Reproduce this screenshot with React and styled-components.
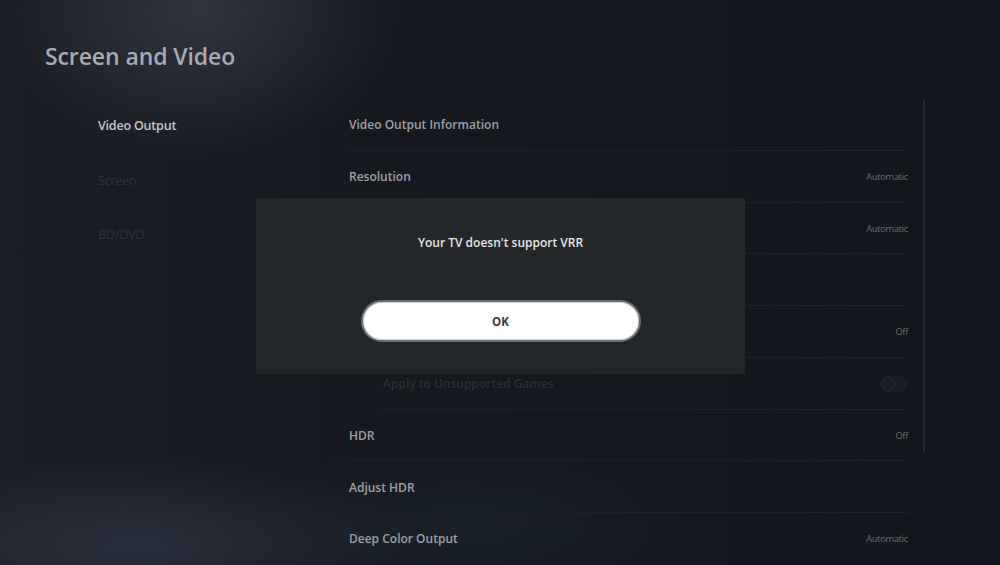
import React from "react";
import styled, { createGlobalStyle } from "styled-components";

const Global = createGlobalStyle`
  html, body { margin: 0; padding: 0; background: #13161c; }
  body { font-family: "Open Sans", "Noto Sans", sans-serif; }
  * { box-sizing: border-box; }
`;

const Page = styled.div`
  position: relative;
  width: 1000px;
  height: 565px;
  overflow: hidden;
  display: flex;
  flex-direction: column;
  background:
    radial-gradient(ellipse 200px 150px at 200px 10px, rgba(72,78,94,0.5), rgba(72,78,94,0) 100%),
    radial-gradient(ellipse 280px 90px at 140px 545px, rgba(56,66,82,0.5), rgba(56,66,82,0) 100%),
    radial-gradient(ellipse 240px 80px at 470px 525px, rgba(30,46,58,0.4), rgba(30,46,58,0) 100%),
    linear-gradient(90deg, #1b1e25 0%, #161920 30%, #12151b 100%);
`;

const Title = styled.h1`
  margin: 41px 0 0 45px;
  height: 30px;
  line-height: 30px;
  font-size: 23px;
  font-weight: 600;
  color: #a7abb3;
  letter-spacing: -0.1px;
`;

const Body = styled.div`
  display: flex;
  margin-top: 28px;
  padding-left: 98px;
`;

const Nav = styled.nav`
  width: 251px;
  display: flex;
  flex-direction: column;
`;

const NavItem = styled.div`
  height: 54.5px;
  display: flex;
  align-items: center;
  font-size: 12.5px;
  font-weight: ${(p) => (p.$active ? 600 : 400)};
  letter-spacing: -0.2px;
  color: ${(p) => (p.$active ? "#c4c7cd" : "#2e323a")};
  padding-bottom: 1px;
`;

const List = styled.div`
  width: 559px;
  display: flex;
  flex-direction: column;
`;

const Row = styled.div`
  height: 51.75px;
  display: flex;
  align-items: center;
  justify-content: space-between;
  padding-left: ${(p) => (p.$indent ? "34px" : "0")};
  position: relative;
  &::after {
    content: "";
    position: absolute;
    left: ${(p) => (p.$indent ? "30px" : "0")};
    right: 0;
    bottom: 0;
    height: 1px;
    background: ${(p) => (p.$last ? "transparent" : "#1e2128")};
  }
`;

const Label = styled.span`
  font-size: 12px;
  font-weight: 600;
  color: ${(p) => (p.$dim ? "#292d35" : "#9ea1a9")};
`;

const Value = styled.span`
  font-size: 9.3px;
  color: #6b6e76;
  letter-spacing: -0.3px;
`;

const Toggle = styled.span`
  width: 28px;
  height: 16px;
  border-radius: 8px;
  background: #191c22;
  position: relative;
  &::before {
    content: "";
    position: absolute;
    left: 1px;
    top: 1px;
    width: 12px;
    height: 12px;
    border-radius: 50%;
    border: 1px solid #2b2e35;
  }
`;

const ScrollTrack = styled.div`
  margin-left: 15px;
  width: 2px;
  height: 352px;
  background: #262930;
  margin-top: 1px;
`;

const Dialog = styled.div`
  position: absolute;
  left: 256px;
  top: 198px;
  width: 489px;
  height: 176px;
  background: linear-gradient(180deg, #25282b 0%, #232629 100%);
  display: flex;
  flex-direction: column;
  align-items: center;
`;

const Message = styled.p`
  margin: 36px 0 0;
  height: 18px;
  line-height: 18px;
  font-size: 12px;
  font-weight: 600;
  color: #e6e6e6;
`;

const OkButton = styled.button`
  margin-top: 48px;
  width: 280px;
  height: 42px;
  border-radius: 21px;
  border: 2px solid #6a6c70;
  background: #ffffff;
  box-shadow: inset 0 0 0 1px #d0d0d0;
  font-family: inherit;
  font-size: 11.5px;
  font-weight: 700;
  color: #3a3a3a;
  cursor: pointer;
`;

const rows = [
  { label: "Video Output Information" },
  { label: "Resolution", value: "Automatic" },
  { label: "4K Video Transfer Rate", value: "Automatic" },
  { label: "VRR" },
  { label: "Automatically Apply VRR", value: "Off" },
  { label: "Apply to Unsupported Games", indent: true, dim: true, toggle: true },
  { label: "HDR", value: "Off" },
  { label: "Adjust HDR" },
  { label: "Deep Color Output", value: "Automatic", last: true },
];

export default function App() {
  return (
    <Page>
      <Global />
      <Title>Screen and Video</Title>
      <Body>
        <Nav>
          <NavItem $active>Video Output</NavItem>
          <NavItem>Screen</NavItem>
          <NavItem>BD/DVD</NavItem>
        </Nav>
        <List>
          {rows.map((r) => (
            <Row key={r.label} $indent={r.indent} $last={r.last}>
              <Label $dim={r.dim}>{r.label}</Label>
              {r.value && <Value>{r.value}</Value>}
              {r.toggle && <Toggle />}
            </Row>
          ))}
        </List>
        <ScrollTrack />
      </Body>
      <Dialog>
        <Message>Your TV doesn't support VRR</Message>
        <OkButton>OK</OkButton>
      </Dialog>
    </Page>
  );
}
